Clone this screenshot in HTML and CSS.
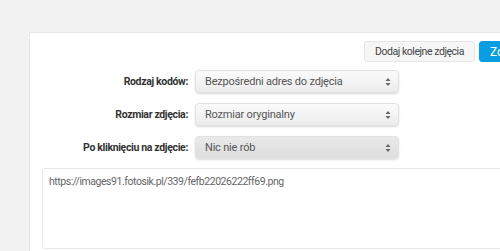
FILE: index.html
```html
<!DOCTYPE html>
<html lang="pl">
<head>
  <meta charset="UTF-8">
  <title>Kody do zdjęcia</title>
  <link rel="stylesheet" href="styles.css">
</head>
<body>

  <div class="panel">
    <div class="toolbar">
      <button class="btn">Dodaj kolejne zdjęcia</button>
      <button class="btn btn-blue">Zobacz zdjęcie</button>
    </div>

    <div class="form">
      <div class="row">
        <label>Rodzaj kodów:</label>
        <div class="select">
          <span>Bezpośredni adres do zdjęcia</span>
          <svg width="6" height="10" viewBox="0 0 6 10"><path d="M3 1 L5.5 4 H0.5 Z M3 9 L5.5 6 H0.5 Z" fill="#666"/></svg>
        </div>
      </div>
      <div class="row">
        <label>Rozmiar zdjęcia:</label>
        <div class="select">
          <span>Rozmiar oryginalny</span>
          <svg width="6" height="10" viewBox="0 0 6 10"><path d="M3 1 L5.5 4 H0.5 Z M3 9 L5.5 6 H0.5 Z" fill="#666"/></svg>
        </div>
      </div>
      <div class="row">
        <label>Po kliknięciu na zdjęcie:</label>
        <div class="select active">
          <span>Nic nie rób</span>
          <svg width="6" height="10" viewBox="0 0 6 10"><path d="M3 1 L5.5 4 H0.5 Z M3 9 L5.5 6 H0.5 Z" fill="#666"/></svg>
        </div>
      </div>
    </div>

    <div class="code">https://images91.fotosik.pl/339/fefb22026222ff69.png</div>
  </div>

</body>
</html>
```

FILE: styles.css
```css
body {
  font-family: Roboto, 'Liberation Sans', sans-serif;
  margin: 0;
  padding: 0;
  background: #f2f2f2;
  overflow: hidden;
}

.panel {
  margin: 32px 0 0 29px;
  width: 600px;
  height: 300px;
  background: #fff;
  border-left: 1px solid #e8e8e8;
  border-top: 1px solid #e8e8e8;
  padding: 8px 0 0 12px;
}

.toolbar {
  display: flex;
  gap: 4px;
  padding-left: 322px;
}

.btn {
  font-family: inherit;
  font-size: 10.5px;
  letter-spacing: -0.45px;
  height: 21px;
  padding: 0 10px;
  border: 1px solid #e6e6e6;
  border-radius: 3px;
  background: #f6f6f6;
  color: #444;
  cursor: pointer;
}

.btn-blue {
  background: #0a9de2;
  border-color: #0a9de2;
  color: #fff;
  font-size: 12px;
  letter-spacing: 0;
}

.form {
  display: flex;
  flex-direction: column;
  gap: 10px;
  margin-top: 8px;
}

.row {
  display: flex;
  align-items: center;
  gap: 7px;
}

.row label {
  width: 146px;
  text-align: right;
  font-size: 10.5px;
  letter-spacing: -0.35px;
  font-weight: bold;
  color: #333;
}

.select {
  display: flex;
  align-items: center;
  justify-content: space-between;
  box-sizing: border-box;
  width: 204px;
  height: 23px;
  padding: 0 7px 0 9px;
  border: 1px solid #e2e2e2;
  border-radius: 4px;
  background: linear-gradient(#fbfbfb, #ececec);
  box-shadow: 0 1px 2px rgba(0,0,0,0.15);
  font-size: 11px;
  letter-spacing: -0.2px;
  color: #555;
}

.select.active {
  background: linear-gradient(#e9e9e9, #dedede);
}

.code {
  margin-top: 9px;
  box-sizing: border-box;
  width: 560px;
  height: 81px;
  padding: 6px 6px;
  border: 1px solid #e8e8e8;
  border-radius: 3px;
  font-size: 10.5px;
  letter-spacing: -0.45px;
  color: #666;
}
```
